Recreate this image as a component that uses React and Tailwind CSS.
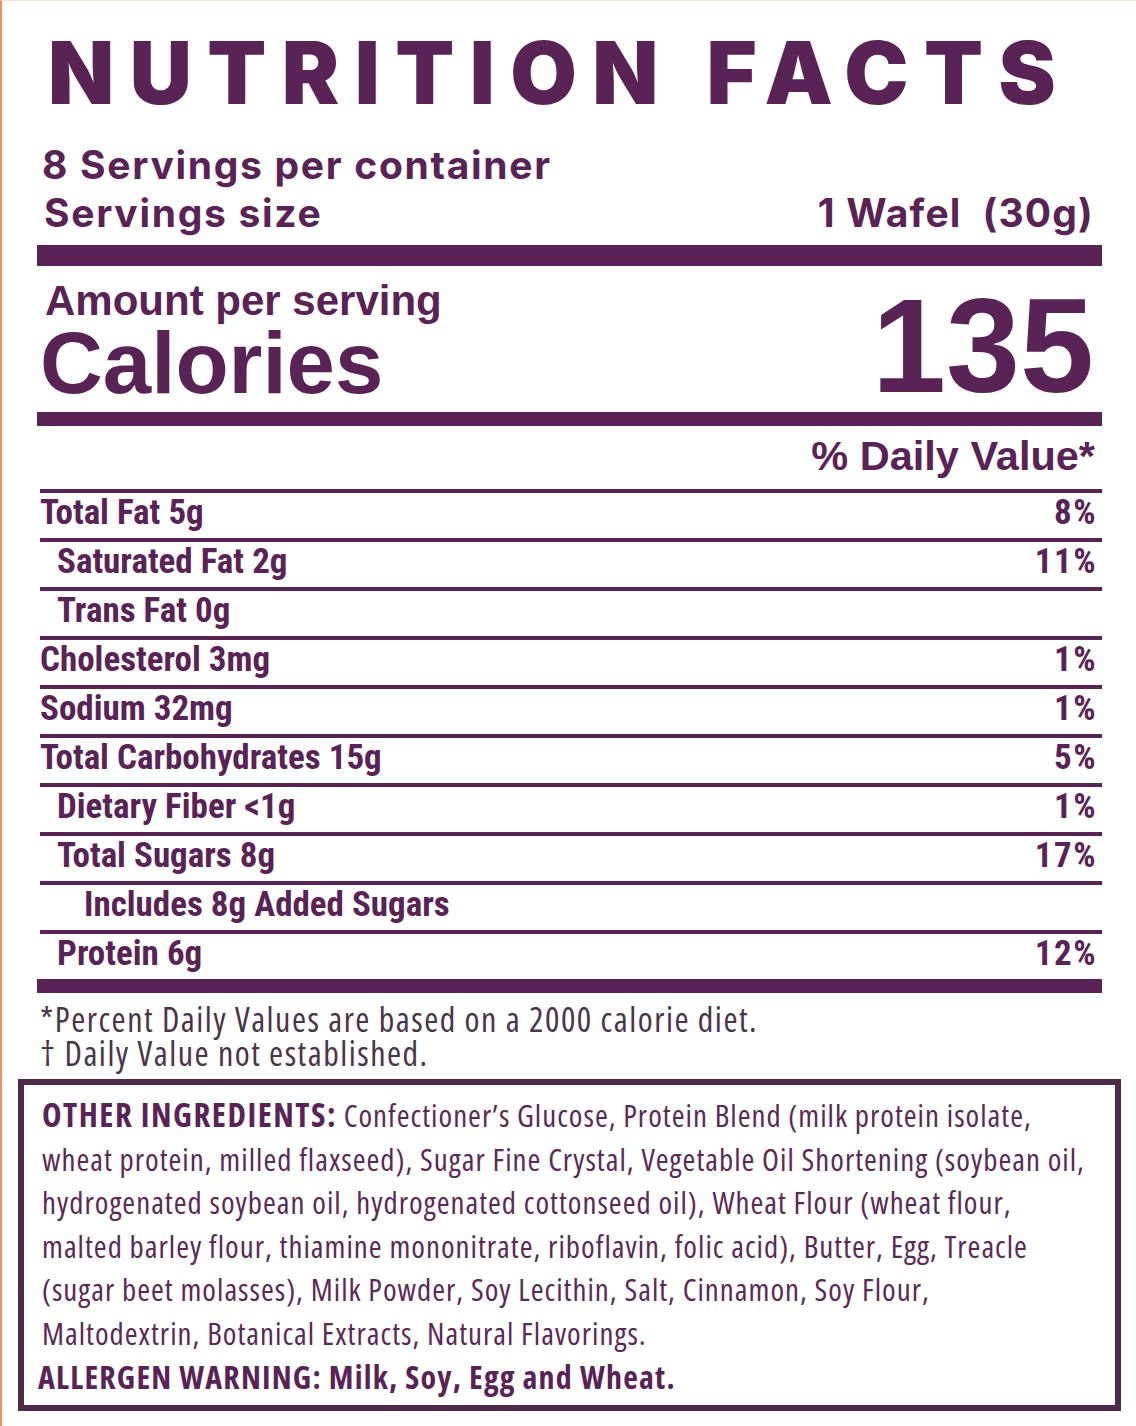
import React from "react";

const ROW_FONT = "font-[family-name:Roboto,sans-serif] font-stretch-condensed";
const COND_FONT = "font-[family-name:'Open_Sans',sans-serif] font-stretch-condensed";

const rows = [
  { label: "Total Fat 5g", value: "8%", indent: "pl-0" },
  { label: "Saturated Fat 2g", value: "11%", indent: "pl-[17px]" },
  { label: "Trans Fat 0g", value: "", indent: "pl-[17px]" },
  { label: "Cholesterol 3mg", value: "1%", indent: "pl-0" },
  { label: "Sodium 32mg", value: "1%", indent: "pl-0" },
  { label: "Total Carbohydrates 15g", value: "5%", indent: "pl-0" },
  { label: "Dietary Fiber <1g", value: "1%", indent: "pl-[17px]" },
  { label: "Total Sugars 8g", value: "17%", indent: "pl-[17px]" },
  { label: "Includes 8g Added Sugars", value: "", indent: "pl-[44px]" },
  { label: "Protein 6g", value: "12%", indent: "pl-[17px]" },
];

export default function App() {
  return (
    <div className="w-[1136px] h-[1426px] bg-white border-l-2 border-t border-l-[#f2905f] border-t-[#fde2d4] overflow-hidden text-[#5a2356]">
      {/* Heading */}
      <div className="mt-[29px] pl-[46px] h-[86px] leading-[86px] text-[86px] font-black tracking-[0.18em] whitespace-nowrap font-[family-name:Inter,sans-serif]">
        NUTRITION FACTS
      </div>

      <div className="ml-[35px] w-[1065px]">
        {/* Servings */}
        <div className="mt-[25px] font-[family-name:Inter,sans-serif] font-bold text-[39px] leading-[48px] tracking-[1.7px]">
          <div className="pl-[5px]">8 Servings per container</div>
          <div className="flex justify-between pl-[7px] pr-[8px]">
            <span>Servings size</span>
            <span className="whitespace-pre tracking-[1.2px]">1 Wafel  (30g)</span>
          </div>
        </div>

        <div className="mt-[8px] h-[21px] bg-[#5a2356]" />

        {/* Calories */}
        <div className="flex justify-between items-end font-[family-name:'Liberation_Sans',Arial,sans-serif] font-bold">
          <div>
            <div className="mt-[13px] pl-[8px] text-[42px] leading-[44px]">Amount per serving</div>
            <div className="pl-[3px] text-[87px] leading-[80px]">Calories</div>
          </div>
          <div className="pr-[8px] text-[133px] leading-[114px]">135</div>
        </div>

        <div className="mt-[9px] h-[14px] bg-[#5a2356]" />

        <div className="mt-[6px] pr-[7px] text-right font-[family-name:'Liberation_Sans',Arial,sans-serif] font-bold text-[41.5px] leading-[48px]">
          % Daily Value*
        </div>

        {/* Rows */}
        <div className={`mt-[9px] ml-[3px] ${ROW_FONT} font-bold text-[35px]`}>
          {rows.map((r) => (
            <div key={r.label} className="border-t-4 border-[#5a2356] h-[49px] flex justify-between leading-[40px] pr-[5px]">
              <span className={r.indent}>{r.label}</span>
              <span className="tracking-[1.5px]">{r.value}</span>
            </div>
          ))}
        </div>
        <div className="h-[14px] bg-[#5a2356]" />

        {/* Footnote */}
        <div className={`mt-[9px] pl-[3px] ${COND_FONT} text-[34px] leading-[34px] tracking-[1.5px] text-[#4a3449]`}>
          <div>*Percent Daily Values are based on a 2000 calorie diet.</div>
          <div>† Daily Value not established.</div>
        </div>
      </div>

      {/* Ingredients box */}
      <div className={`mt-[9px] ml-[16px] w-[1103px] border-[6px] border-[#4d2b4b] pl-[18px] pt-[8px] pb-[6px] ${COND_FONT} text-[31px] leading-[43.5px] tracking-[1px] text-[#5a2a57] whitespace-nowrap`}>
        <div>
          <span className="font-bold text-[33px] tracking-[1.5px] text-[#5a2356]">OTHER INGREDIENTS:</span> Confectioner’s Glucose, Protein Blend (milk protein isolate,
        </div>
        <div>wheat protein, milled flaxseed), Sugar Fine Crystal, Vegetable Oil Shortening (soybean oil,</div>
        <div>hydrogenated soybean oil, hydrogenated cottonseed oil), Wheat Flour (wheat flour,</div>
        <div>malted barley flour, thiamine mononitrate, riboflavin, folic acid), Butter, Egg, Treacle</div>
        <div>(sugar beet molasses), Milk Powder, Soy Lecithin, Salt, Cinnamon, Soy Flour,</div>
        <div>Maltodextrin, Botanical Extracts, Natural Flavorings.</div>
        <div className="-ml-[4px] font-bold text-[32px] tracking-[1.2px] text-[#5a2356]">ALLERGEN WARNING: Milk, Soy, Egg and Wheat.</div>
      </div>
    </div>
  );
}
